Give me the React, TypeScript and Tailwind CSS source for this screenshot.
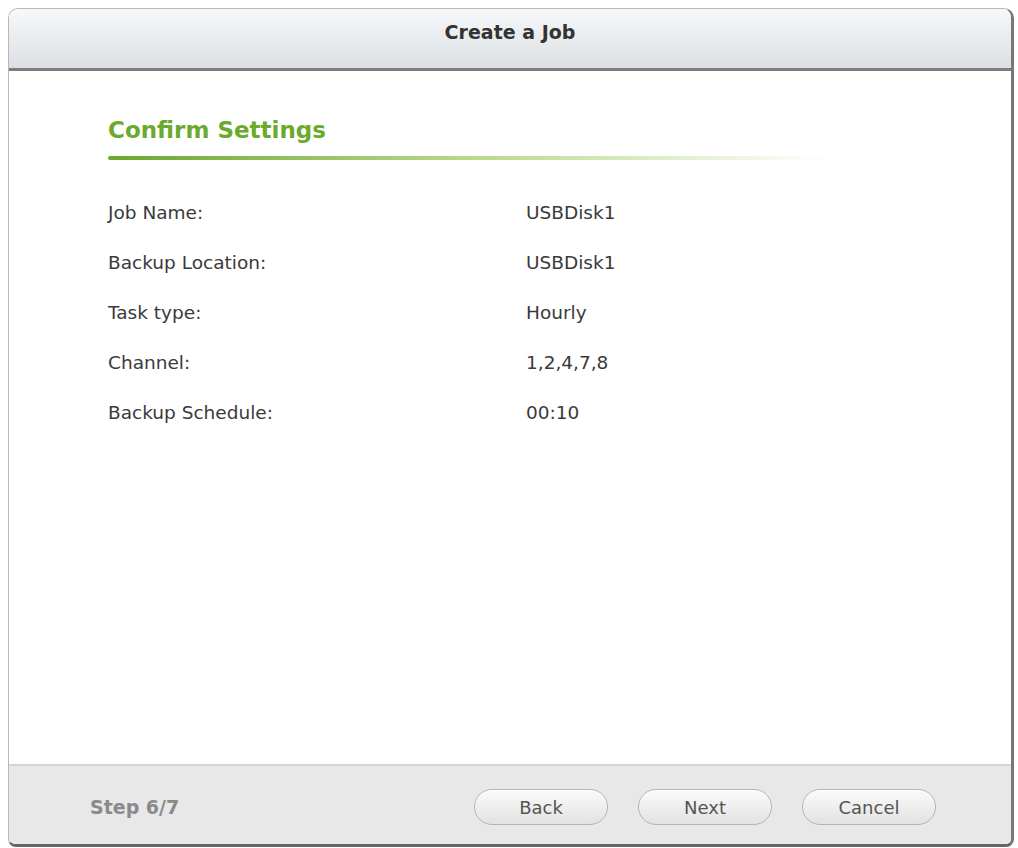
import React from 'react';

const rows: [string, string][] = [
  ['Job Name:', 'USBDisk1'],
  ['Backup Location:', 'USBDisk1'],
  ['Task type:', 'Hourly'],
  ['Channel:', '1,2,4,7,8'],
  ['Backup Schedule:', '00:10'],
];

const font = { fontFamily: '"DejaVu Sans", Verdana, sans-serif' };

const PillButton: React.FC<{ label: string }> = ({ label }) => (
  <button className="w-[134px] h-[36px] rounded-full border border-[#b4b4b4] bg-gradient-to-b from-[#fbfbfb] to-[#e2e2e2] text-[18px] text-[#555] shadow-[inset_0_1px_0_#fff]">
    {label}
  </button>
);

export default function App() {
  return (
    <div className="w-[1018px] h-[848px] bg-white pt-[8px] pl-[8px] pr-[4px] pb-[1px]" style={font}>
      <div className="h-full flex flex-col rounded-t-[10px] rounded-b-[8px] border-t border-l border-[#b8b8b8] border-r-[3px] border-r-[#777] border-b-[3px] border-b-[#666] overflow-hidden bg-white">
        {/* Header */}
        <div className="h-[62px] shrink-0 flex items-center justify-center bg-gradient-to-b from-[#f6f8fa] to-[#dce0e4] border-b-[3px] border-[#7d7d7d]">
          <h1 className="text-[19px] font-bold text-[#333] -mt-[12px]">Create a Job</h1>
        </div>

        {/* Body */}
        <div className="flex-1 pl-[99px] pt-[48px]">
          <h2 className="text-[23px] font-bold text-[#6aaa2c] leading-none">Confirm Settings</h2>
          <div className="mt-[14px] w-[720px] h-[4px] rounded-full bg-gradient-to-r from-[#6aa72a] via-[#b8d888] to-transparent" />
          <div className="mt-[42px] flex flex-col gap-[28px]">
            {rows.map(([label, value]) => (
              <div key={label} className="flex items-center h-[22px] text-[18.5px] text-[#3a3a3a]">
                <span className="w-[418px]">{label}</span>
                <span>{value}</span>
              </div>
            ))}
          </div>
        </div>

        {/* Footer */}
        <div className="h-[80px] shrink-0 bg-[#e8e8e8] border-t-2 border-[#d4d4d4] flex items-center pl-[81px] pr-[75px] pt-[4px]">
          <span className="text-[19px] font-bold text-[#8a8a8a]">Step 6/7</span>
          <div className="ml-auto flex gap-[30px]">
            <PillButton label="Back" />
            <PillButton label="Next" />
            <PillButton label="Cancel" />
          </div>
        </div>
      </div>
    </div>
  );
}
